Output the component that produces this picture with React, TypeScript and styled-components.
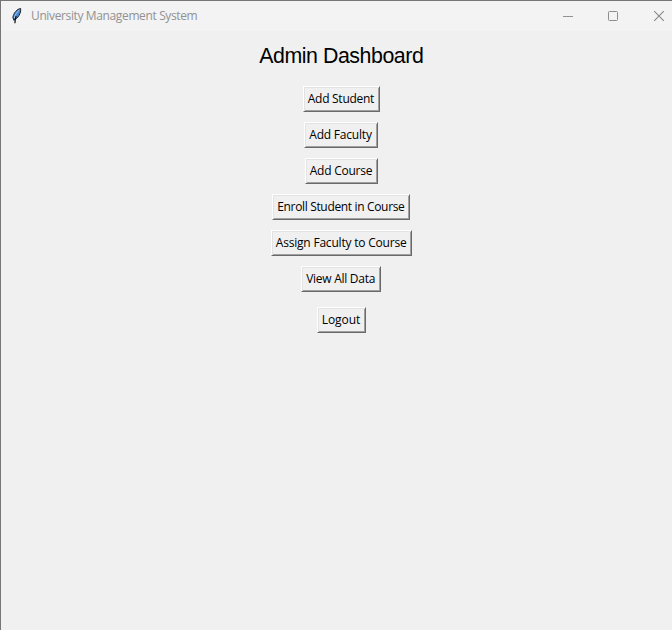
import React from "react";
import styled, { createGlobalStyle } from "styled-components";

const GlobalStyle = createGlobalStyle`
  html, body { margin: 0; padding: 0; background: #f0f0f0; overflow: hidden; }
  *, *::before, *::after { box-sizing: border-box; }
`;

const Window = styled.div`
  width: 672px;
  height: 630px;
  display: flex;
  flex-direction: column;
  overflow: hidden;
  background: #f0f0f0;
  border-top: 1px solid #777576;
  border-left: 1px solid #777576;
`;

const TitleBar = styled.header`
  flex: none;
  height: 30px;
  display: flex;
  align-items: center;
  padding-left: 10px;
  background: #f3f3f3;
`;

const WindowTitle = styled.span`
  flex: 1;
  margin-left: 8px;
  font: 12px/16px "Open Sans", sans-serif;
  letter-spacing: -0.37px;
  color: #929292;
  white-space: nowrap;
`;

const Controls = styled.div`
  display: flex;
  margin-right: -10px;
`;

const Control = styled.div`
  width: 46px;
  height: 29px;
  display: flex;
  align-items: center;
  justify-content: center;
`;

const Content = styled.main`
  flex: none;
  width: 680.5px;
  display: flex;
  flex-direction: column;
  align-items: center;
`;

const Heading = styled.h1`
  margin: 10px 0 15px;
  font: 400 21.33px/30px "Liberation Sans", Arial, sans-serif;
  letter-spacing: -0.44px;
  color: #000;
  white-space: nowrap;
`;

const Actions = styled.div`
  display: flex;
  flex-direction: column;
  align-items: center;
  gap: 10px;
`;

const TkButton = styled.button<{ $width: number; $tracking: number }>`
  width: ${(p) => p.$width}px;
  height: 26px;
  padding: 0 0 0 4px;
  display: flex;
  align-items: center;
  justify-content: flex-start;
  border: 1px solid;
  border-color: #fff #696969 #696969 #fff;
  border-radius: 0;
  background: #f0f0f0;
  box-shadow: inset 1px 1px #e3e3e3, inset -1px -1px #a0a0a0;
  font: 12px/16px "Open Sans", sans-serif;
  letter-spacing: ${(p) => p.$tracking}px;
  color: #000;
  white-space: nowrap;
`;

const LogoutRow = styled.div`
  margin-top: 15px;
`;

const actions = [
  { label: "Add Student", width: 77, tracking: -0.27 },
  { label: "Add Faculty", width: 74, tracking: -0.2 },
  { label: "Add Course", width: 73, tracking: -0.25 },
  { label: "Enroll Student in Course", width: 138, tracking: -0.34 },
  { label: "Assign Faculty to Course", width: 141, tracking: -0.2 },
  { label: "View All Data", width: 80, tracking: -0.28 },
];

const Feather = () => (
  <svg width="12" height="18" viewBox="0 0 12 18">
    <path d="M9.6 1.5 C6 2 2.6 6 1.9 10.2 L2.8 13.2 C6.8 11.8 10.4 6 9.6 1.5Z" fill="#4a86d0" stroke="#1b2430" strokeWidth="1" />
    <path d="M8.3 3.2 C5.8 5 4 8 3.3 11" fill="none" stroke="#a9c9ee" strokeWidth="1" />
    <path d="M5.2 9 C4.1 11.5 3.9 13 3.9 16.2" fill="none" stroke="#0a0c10" strokeWidth="1.2" />
  </svg>
);

const MinimizeIcon = () => (
  <svg width="12" height="12" viewBox="0 0 12 12">
    <path d="M2 6.5H12" stroke="#929292" />
  </svg>
);

const MaximizeIcon = () => (
  <svg width="12" height="12" viewBox="0 0 12 12">
    <rect x="1.5" y="1.5" width="9" height="9" rx="1" fill="none" stroke="#8c8c8c" />
  </svg>
);

const CloseIcon = () => (
  <svg width="12" height="12" viewBox="0 0 12 12">
    <path d="M1.2 1.2L10.8 10.8M10.8 1.2L1.2 10.8" stroke="#888" strokeWidth="1.1" />
  </svg>
);

export default function App() {
  return (
    <>
      <GlobalStyle />
      <Window>
        <TitleBar>
          <Feather />
          <WindowTitle>University Management System</WindowTitle>
          <Controls>
            <Control><MinimizeIcon /></Control>
            <Control><MaximizeIcon /></Control>
            <Control><CloseIcon /></Control>
          </Controls>
        </TitleBar>
        <Content>
          <Heading>Admin Dashboard</Heading>
          <Actions>
            {actions.map((a) => (
              <TkButton key={a.label} $width={a.width} $tracking={a.tracking}>{a.label}</TkButton>
            ))}
          </Actions>
          <LogoutRow>
            <TkButton $width={49} $tracking={-0.08}>Logout</TkButton>
          </LogoutRow>
        </Content>
      </Window>
    </>
  );
}
